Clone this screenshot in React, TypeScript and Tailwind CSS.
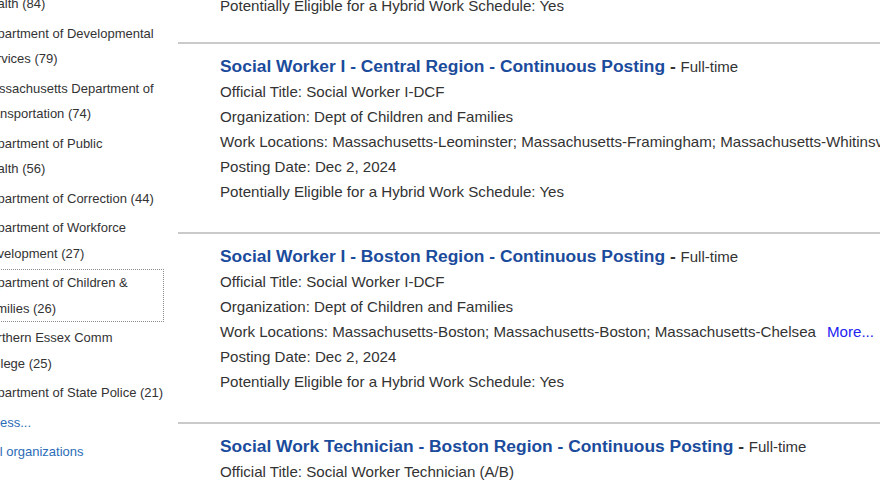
import React from 'react';

type Org = { name: string; count: number; focused?: boolean };

const orgs: Org[] = [
  { name: 'Department of Mental Health', count: 84 },
  { name: 'Department of Developmental Services', count: 79 },
  { name: 'Massachusetts Department of Transportation', count: 74 },
  { name: 'Department of Public Health', count: 56 },
  { name: 'Department of Correction', count: 44 },
  { name: 'Department of Workforce Development', count: 27 },
  { name: 'Department of Children & Families', count: 26, focused: true },
  { name: 'Northern Essex Comm College', count: 25 },
  { name: 'Department of State Police', count: 21 },
];

type Job = {
  title: string;
  official: string;
  org: string;
  locations: string;
  more?: boolean;
  date: string;
};

const jobs: Job[] = [
  {
    title: 'Social Worker I - Central Region - Continuous Posting',
    official: 'Social Worker I-DCF',
    org: 'Dept of Children and Families',
    locations:
      'Massachusetts-Leominster; Massachusetts-Framingham; Massachusetts-Whitinsville',
    date: 'Dec 2, 2024',
  },
  {
    title: 'Social Worker I - Boston Region - Continuous Posting',
    official: 'Social Worker I-DCF',
    org: 'Dept of Children and Families',
    locations: 'Massachusetts-Boston; Massachusetts-Boston; Massachusetts-Chelsea',
    more: true,
    date: 'Dec 2, 2024',
  },
  {
    title: 'Social Work Technician - Boston Region - Continuous Posting',
    official: 'Social Worker Technician (A/B)',
    org: 'Dept of Children and Families',
    locations: 'Massachusetts-Boston; Massachusetts-Boston',
    date: 'Dec 2, 2024',
  },
];

function Sidebar() {
  return (
    <aside className="w-[184px] shrink-0 -ml-[19px] -mt-[36.25px] text-[13px] leading-[25.5px] text-[#333]">
      <ul>
        {orgs.map((o) => {
          const words = o.name.split(' ');
          const last = words.pop();
          return (
            <li key={o.name}>
              <a
                href="#"
                className={
                  'block py-[2px] ' +
                  (o.focused
                    ? 'outline outline-1 outline-dotted outline-[#8a8a8a] -outline-offset-2'
                    : '')
                }
              >
                {words.join(' ')}{' '}
                <span className="whitespace-nowrap">
                  {last} ({o.count})
                </span>
              </a>
            </li>
          );
        })}
      </ul>
      <a href="#" className="block py-[2px] -ml-[20px] text-[#2b6cb8]">
        Show less...
      </a>
      <a href="#" className="block py-[2px] -ml-[23px] text-[#2b6cb8]">
        View all organizations
      </a>
    </aside>
  );
}

function JobRow({ job }: { job: Job }) {
  return (
    <div className="border-t-2 border-[#cacaca] pl-[42px] pt-[8.5px] pb-[28.5px] whitespace-nowrap">
      <div className="h-[26px] leading-[26px] text-[17.4px] font-bold">
        <a href="#" className="text-[#1b4b9c]">
          {job.title}
        </a>
        <span className="text-[#333]"> - </span>
        <span className="text-[15px] font-normal text-[#333]">Full-time</span>
      </div>
      <div className="text-[15.12px] leading-[25px] text-[#333]">
        <div>Official Title: {job.official}</div>
        <div>Organization: {job.org}</div>
        <div>
          Work Locations: {job.locations}
          {job.more && (
            <a href="#" className="ml-[11px] text-[#2323f0]">
              More...
            </a>
          )}
        </div>
        <div>Posting Date: {job.date}</div>
        <div>Potentially Eligible for a Hybrid Work Schedule: Yes</div>
      </div>
    </div>
  );
}

export default function App() {
  return (
    <div
      className="h-[486px] w-[880px] overflow-hidden bg-white flex"
      style={{ fontFamily: '"Liberation Sans", Arial, sans-serif' }}
    >
      <Sidebar />
      <main className="ml-[13px] flex-1 min-w-0">
        <div className="-mt-[7.5px] pb-[24.5px] pl-[42px] text-[15.12px] leading-[25px] text-[#333] whitespace-nowrap">
          Potentially Eligible for a Hybrid Work Schedule: Yes
        </div>
        {jobs.map((j) => (
          <JobRow key={j.title} job={j} />
        ))}
      </main>
    </div>
  );
}
